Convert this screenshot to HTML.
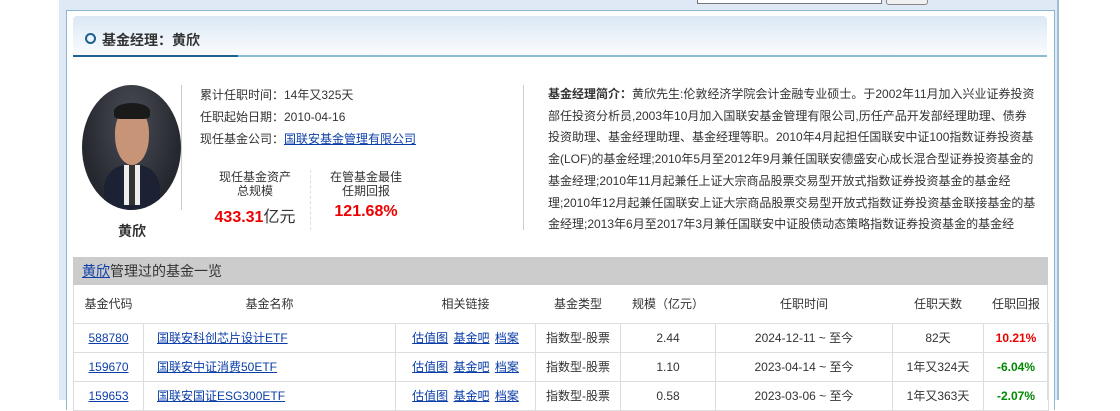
<!DOCTYPE html>
<html><head><meta charset="utf-8"><style>
*{margin:0;padding:0;box-sizing:border-box}
body{width:1120px;height:400px;background:#fff;position:relative;overflow:hidden;font-family:"Liberation Sans","Noto Sans CJK SC",sans-serif;font-size:12px;color:#333}
.a{position:absolute}
a{color:#0b3ea8;text-decoration:underline}
.outer{left:59px;top:0;width:1000px;height:400px;background:#dfe9f5;border-right:2px solid #9dbdd6}
.inner{left:66px;top:10px;width:989px;height:400px;background:#fff;border:1px solid #8cb8d0;border-bottom:none}
.hdr{left:73px;top:16px;width:974px;height:40px;background:linear-gradient(#dce8f4,#fafcfe);border-radius:4px 4px 0 0}
.line1{left:73px;top:55px;width:165px;height:2px;background:#1f6190}
.line2{left:238px;top:55px;width:809px;height:2px;background:#8cbcd3}
.info div{height:22px;line-height:22px}
.bio{left:548px;top:84px;width:500px;line-height:21.7px;font-size:12px;color:#333;white-space:nowrap}
table{border-collapse:collapse;position:absolute;left:73px;top:285px;width:975px;table-layout:fixed}
td,th{font-weight:normal;text-align:center;font-size:12px;color:#333}
th{height:38px}
td{height:29px;border:1px solid #ddd;line-height:28px}
td.l{text-align:left;padding-left:12px}
td a{margin:0 1px}
</style></head><body>
<div class="a outer"></div>
<div class="a" style="left:697px;top:-2px;width:185px;height:6px;border:1px solid #777;background:#fff"></div>
<div class="a" style="left:886px;top:-2px;width:42px;height:7px;border:1px solid #888;border-radius:3px;background:#f0f0f0"></div>
<div class="a inner"></div>
<div class="a hdr"></div>
<div class="a line1"></div><div class="a line2"></div>
<div class="a" style="left:85px;top:33px;width:11px;height:11px;border:2px solid #1f6190;border-radius:50%"></div>
<div class="a" style="left:102px;top:30px;font-size:14px;font-weight:bold;color:#333">基金经理：黄欣</div>

<div class="a" style="left:82px;top:85px;width:99px;height:125px;border-radius:50%;overflow:hidden;background:radial-gradient(ellipse at 50% 30%,#4a4d55,#25282f 70%)">
<div class="a" style="left:22px;top:80px;width:56px;height:60px;border-radius:40% 40% 0 0;background:#1c2233"></div>
<div class="a" style="left:42px;top:80px;width:16px;height:40px;background:linear-gradient(90deg,#eee 0 30%,#333 30% 70%,#eee 70%)"></div>
<div class="a" style="left:33px;top:22px;width:34px;height:58px;border-radius:45% 45% 50% 50%;background:#c89478"></div>
<div class="a" style="left:32px;top:18px;width:36px;height:16px;border-radius:50% 50% 20% 20%;background:#1a1a1a"></div>
</div>
<div class="a" style="left:181px;top:85px;width:1px;height:125px;background:#ccc"></div>
<div class="a" style="left:118px;top:221px;font-size:14px;font-weight:bold">黄欣</div>

<div class="a info" style="left:200px;top:84px">
<div>累计任职时间：14年又325天</div>
<div>任职起始日期：2010-04-16</div>
<div>现任基金公司：<a>国联安基金管理有限公司</a></div>
</div>
<div class="a" style="left:205px;top:170px;width:100px;text-align:center;line-height:14px">现任基金资产<br>总规模</div>
<div class="a" style="left:205px;top:203px;width:100px;text-align:center;font-size:16px"><b style="color:#e00">433.31</b>亿元</div>
<div class="a" style="left:310px;top:170px;width:1px;height:60px;border-left:1px dashed #ddd"></div>
<div class="a" style="left:316px;top:170px;width:100px;text-align:center;line-height:14px">在管基金最佳<br>任期回报</div>
<div class="a" style="left:316px;top:203px;width:100px;text-align:center;font-size:16px;font-weight:bold;color:#e00">121.68%</div>

<div class="a" style="left:523px;top:85px;width:1px;height:145px;background:#ccc"></div>
<div class="a bio"><b>基金经理简介：</b>黄欣先生:伦敦经济学院会计金融专业硕士。于2002年11月加入兴业证券投资<br>部任投资分析员,2003年10月加入国联安基金管理有限公司,历任产品开发部经理助理、债券<br>投资助理、基金经理助理、基金经理等职。2010年4月起担任国联安中证100指数证券投资基<br>金(LOF)的基金经理;2010年5月至2012年9月兼任国联安德盛安心成长混合型证券投资基金的<br>基金经理;2010年11月起兼任上证大宗商品股票交易型开放式指数证券投资基金的基金经<br>理;2010年12月起兼任国联安上证大宗商品股票交易型开放式指数证券投资基金联接基金的基<br>金经理;2013年6月至2017年3月兼任国联安中证股债动态策略指数证券投资基金的基金经</div>

<div class="a" style="left:73px;top:257px;width:975px;height:28px;background:#cccccc;line-height:28px;padding-left:9px;font-size:14px"><a>黄欣</a>管理过的基金一览</div>
<div class="a" style="left:73px;top:285px;width:975px;height:115px;border-left:1px solid #ddd;border-right:1px solid #ddd"></div>
<table>
<colgroup><col style="width:70px"><col style="width:252px"><col style="width:140px"><col style="width:85px"><col style="width:95px"><col style="width:177px"><col style="width:91px"><col style="width:65px"></colgroup>
<tr><th>基金代码</th><th>基金名称</th><th>相关链接</th><th>基金类型</th><th>规模（亿元）</th><th>任职时间</th><th>任职天数</th><th>任职回报</th></tr>
<tr><td><a>588780</a></td><td class="l"><a>国联安科创芯片设计ETF</a></td><td><a>估值图</a> <a>基金吧</a> <a>档案</a></td><td>指数型-股票</td><td>2.44</td><td>2024-12-11 ~ 至今</td><td>82天</td><td style="color:#e00;font-weight:bold">10.21%</td></tr>
<tr><td><a>159670</a></td><td class="l"><a>国联安中证消费50ETF</a></td><td><a>估值图</a> <a>基金吧</a> <a>档案</a></td><td>指数型-股票</td><td>1.10</td><td>2023-04-14 ~ 至今</td><td>1年又324天</td><td style="color:#080;font-weight:bold">-6.04%</td></tr>
<tr><td><a>159653</a></td><td class="l"><a>国联安国证ESG300ETF</a></td><td><a>估值图</a> <a>基金吧</a> <a>档案</a></td><td>指数型-股票</td><td>0.58</td><td>2023-03-06 ~ 至今</td><td>1年又363天</td><td style="color:#080;font-weight:bold">-2.07%</td></tr>
</table>
</body></html>
